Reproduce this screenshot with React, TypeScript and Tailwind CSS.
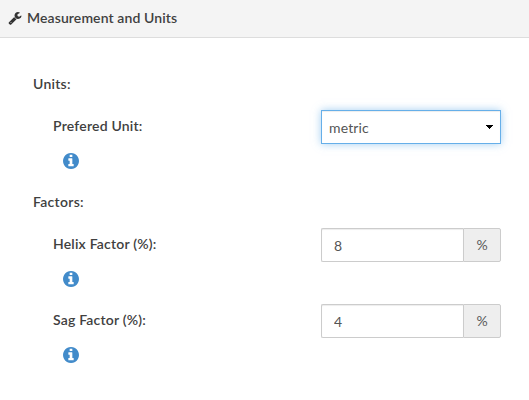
import { useState } from "react";

function WrenchIcon() {
  return (
    <svg viewBox="0 0 1792 1792" className="-mt-[2px] h-[14px] w-[14px] shrink-0 text-[#333333]" fill="currentColor" aria-hidden="true">
      <path d="M448 1472q0-26-19-45t-45-19-45 19-19 45 19 45 45 19 45-19 19-45zm644-420l-682 682q-37 37-90 37-52 0-91-37l-106-108q-38-36-38-90 0-53 38-91l681-681q39 98 114.500 173.500t173.500 114.500zm634-435q0 39-23 106-47 134-164.500 217.500t-258.500 83.500q-185 0-316.500-131.500t-131.500-316.500 131.500-316.500 316.500-131.500q58 0 121.500 16.500t107.500 46.500q16 11 16 28t-16 28l-293 169v224l193 107q5-3 79-48.500t135.500-81 70.500-35.500q15 0 23.500 10t8.500 25z" />
    </svg>
  );
}

function InfoIcon() {
  return (
    <svg viewBox="128 128 1536 1536" className="mt-[17px] ml-[10px] h-4 w-4 text-[#428bca]" fill="currentColor" aria-hidden="true">
      <path d="M1152 1376v-160q0-14-9-23t-23-9h-96v-512q0-14-9-23t-23-9h-320q-14 0-23 9t-9 23v160q0 14 9 23t23 9h96v320h-96q-14 0-23 9t-9 23v160q0 14 9 23t23 9h448q14 0 23-9t9-23zm-128-896v-160q0-14-9-23t-23-9h-192q-14 0-23 9t-9 23v160q0 14 9 23t23 9h192q14 0 23-9t9-23zm640 416q0 209-103 385.500t-279.500 279.500-385.500 103-385.500-103-279.500-279.500-103-385.500 103-385.500 279.500-279.500 385.500-103 385.500 103 279.500 279.500 103 385.500z" />
    </svg>
  );
}

function FieldLabel({ text }: { text: string }) {
  return (
    <div className="pt-[6px]">
      <div className="h-5 font-semibold leading-5 tracking-[0.2px]">{text}</div>
      <InfoIcon />
    </div>
  );
}

function PercentField({ label, initial }: { label: string; initial: string }) {
  const [value, setValue] = useState(initial);
  return (
    <div className="flex h-[76px] items-start justify-between pr-7 pl-[53px]">
      <FieldLabel text={label} />
      <div className="flex h-[34px] w-[180px]">
        <input
          aria-label={label}
          value={value}
          onChange={(e) => setValue(e.target.value)}
          className="h-full w-[142px] rounded-l-[2px] border border-r-0 border-[#cccccc] bg-white px-3 text-[#555555] shadow-[inset_0_1px_1px_rgba(0,0,0,0.075)] outline-none"
        />
        <span className="flex h-full w-[38px] items-center justify-center rounded-r-[2px] border border-[#cccccc] bg-[#eeeeee] text-[#5a5a5a]">
          %
        </span>
      </div>
    </div>
  );
}

export default function App() {
  return (
    <div className="h-[400px] w-full overflow-hidden bg-white font-['Lato',sans-serif] text-[14px] leading-5 text-[#404040]">
      <header className="flex h-[38px] items-center gap-[5px] border-b border-[#dddddd] bg-[#f4f4f4] pl-2">
        <WrenchIcon />
        <h1 className="-mt-[2px] font-semibold tracking-[0.1px]">Measurement and Units</h1>
      </header>
      <main className="pt-9">
        <h2 className="h-9 pl-[33px] font-semibold tracking-[0.25px]">Units:</h2>
        <div className="flex h-[82px] items-start justify-between pr-7 pl-[53px]">
          <FieldLabel text="Prefered Unit:" />
          <button
            type="button"
            className="flex h-[34px] w-[180px] items-center justify-between border border-[#66afe9] bg-white pr-[7px] pl-[7px] text-[#555555] shadow-[inset_0_1px_1px_rgba(0,0,0,0.075),0_0_8px_rgba(102,175,233,0.6)]"
          >
            <span className="pt-[2px] tracking-[0.15px]">metric</span>
            <svg width="7" height="4" viewBox="0 0 7 4" shapeRendering="crispEdges" aria-hidden="true">
              <path d="M0 0h7v1h-1v1h-1v1h-1v1h-1v-1h-1v-1h-1v-1h-1z" fill="#000" />
            </svg>
          </button>
        </div>
        <h2 className="h-9 pl-[33px] font-semibold tracking-[0.3px]">Factors:</h2>
        <PercentField label="Helix Factor (%):" initial="8" />
        <PercentField label="Sag Factor (%):" initial="4" />
      </main>
    </div>
  );
}
